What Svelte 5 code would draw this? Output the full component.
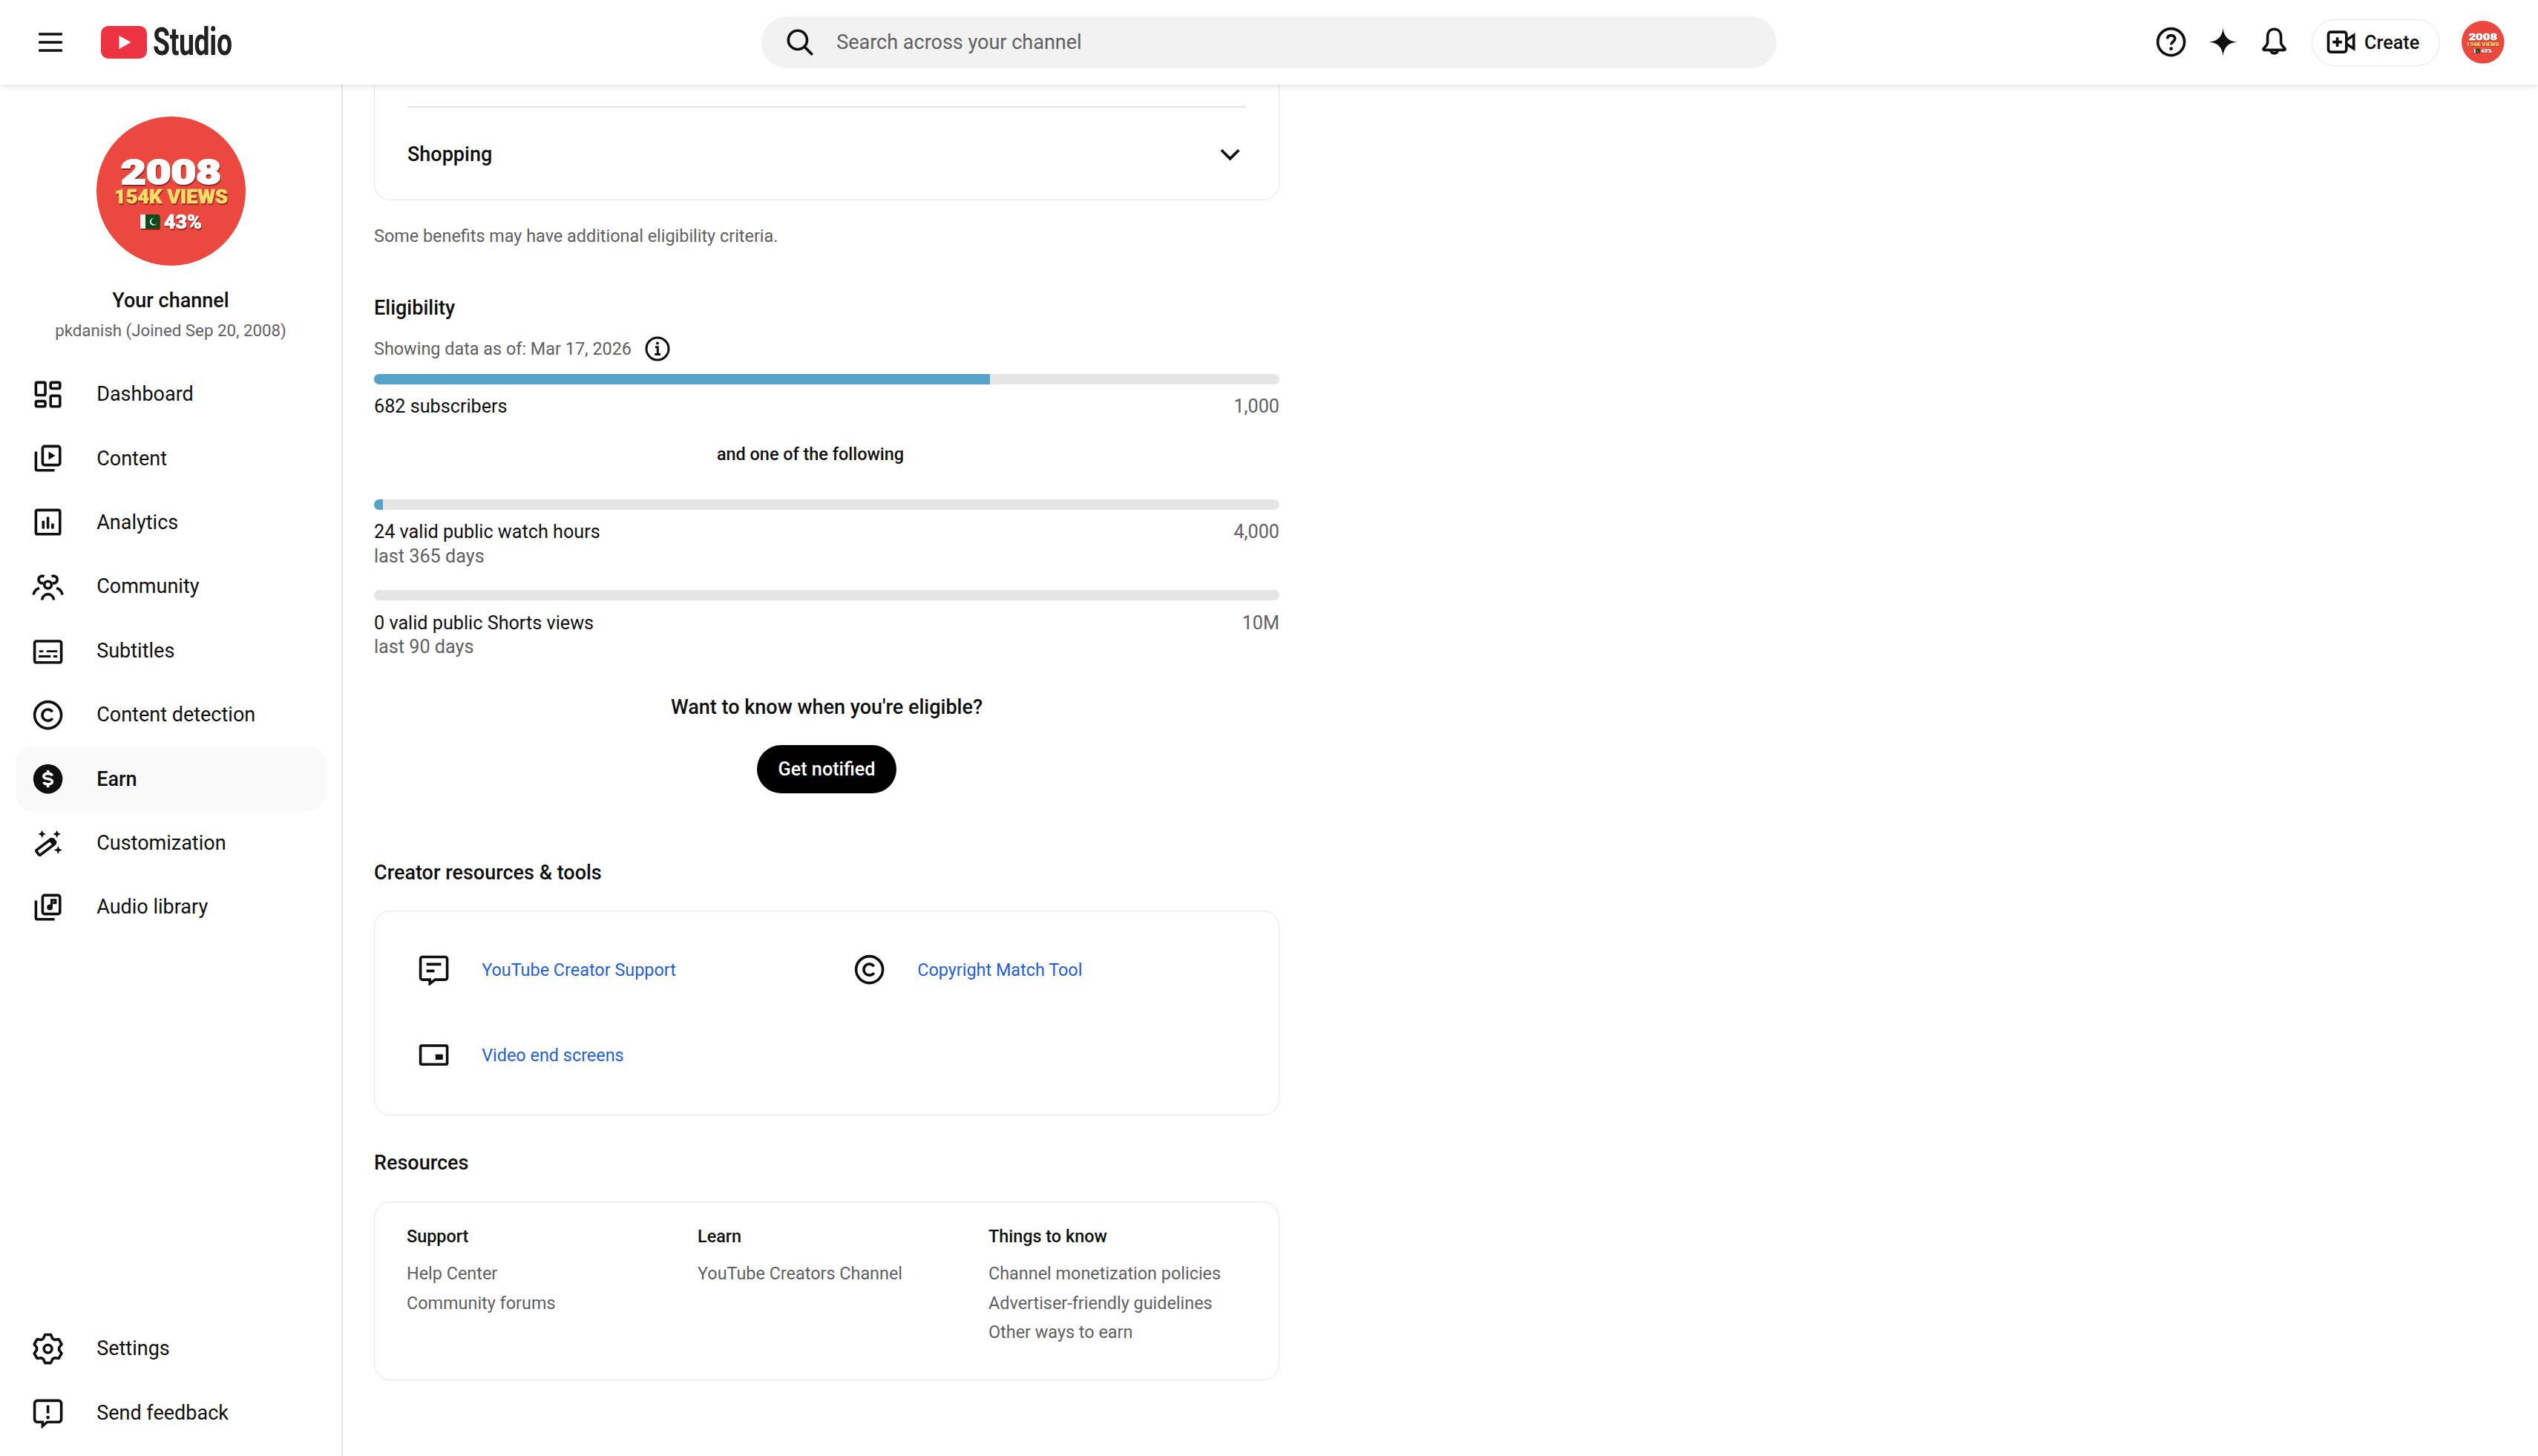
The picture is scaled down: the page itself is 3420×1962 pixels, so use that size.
<script lang="ts">
  const navTop = [
    { id: "dashboard", label: "Dashboard" },
    { id: "content", label: "Content" },
    { id: "analytics", label: "Analytics" },
    { id: "community", label: "Community" },
    { id: "subtitles", label: "Subtitles" },
    { id: "copyright", label: "Content detection" },
    { id: "earn", label: "Earn", active: true },
    { id: "wand", label: "Customization" },
    { id: "audio", label: "Audio library" },
  ];
  const navBottom = [
    { id: "settings", label: "Settings" },
    { id: "feedback", label: "Send feedback" },
  ];
  const tools = [
    { id: "support", label: "YouTube Creator Support" },
    { id: "copyright", label: "Copyright Match Tool" },
    { id: "endscreen", label: "Video end screens" },
  ];
  const resources = [
    { title: "Support", links: ["Help Center", "Community forums"] },
    { title: "Learn", links: ["YouTube Creators Channel"] },
    { title: "Things to know", links: ["Channel monetization policies", "Advertiser-friendly guidelines", "Other ways to earn"] },
  ];

  // six lobed cog outline for the settings icon
  function gearPath(): string {
    const pts: string[] = [];
    for (let k = 0; k < 6; k++) {
      const a = (k * Math.PI) / 3 - Math.PI / 2;
      const at = (r: number, off: number) =>
        `${(12 + r * Math.cos(a + off)).toFixed(2)} ${(12 + r * Math.sin(a + off)).toFixed(2)}`;
      pts.push(at(8.4, -0.42), at(10.8, -0.2), at(10.8, 0.2), at(8.4, 0.42));
    }
    return "M" + pts.join("L") + "Z";
  }
  const gear = gearPath();
</script>

{#snippet glyph(name: string)}
  <svg class="icon" viewBox="0 0 24 24" fill="none" stroke="#0f0f0f" stroke-width="2" aria-hidden="true">
    {#if name === "dashboard"}
      <rect x="3" y="3" width="7" height="9.5" rx="1" />
      <rect x="14" y="3" width="7" height="4.5" rx="1" />
      <rect x="3" y="17" width="7" height="4" rx="1" />
      <rect x="14" y="13" width="7" height="8" rx="1" />
    {:else if name === "content"}
      <rect x="8" y="3" width="13" height="14" rx="1.5" />
      <path d="M3 7v13a1 1 0 0 0 1 1h13" />
      <path d="M12.5 7v6l5-3z" fill="#0f0f0f" stroke="none" />
    {:else if name === "analytics"}
      <rect x="3" y="3" width="18" height="18" rx="1.2" />
      <path d="M7.5 11h2v6h-2zM11 8h2v9h-2zM14.5 13h2v4h-2z" fill="#0f0f0f" stroke="none" />
    {:else if name === "community"}
      <circle cx="12" cy="10.6" r="2.7" />
      <path d="M7.6 22a4.4 4.4 0 0 1 8.8 0" />
      <path d="M8.6 9.2a2.7 2.7 0 1 1 .6-4.8" />
      <path d="M15.4 9.2a2.7 2.7 0 1 0-.6-4.8" />
      <path d="M1.2 18a6 6 0 0 1 4.4-5" />
      <path d="M22.8 18a6 6 0 0 0-4.4-5" />
    {:else if name === "subtitles"}
      <rect x="2" y="5" width="20" height="16" rx="1.3" />
      <path d="M5.5 12.6h3M11 12.6h8M5 16.4h9M16 16.4h3" stroke-width="1.6" />
    {:else if name === "copyright"}
      <circle cx="12" cy="12" r="10" />
      <path d="M15.4 9.6a4.2 4.2 0 1 0 0 4.8" />
    {:else if name === "earn"}
      <circle cx="12" cy="12" r="11" fill="#0f0f0f" stroke="none" />
      <path d="M15.2 9.6C14.8 8.5 13.6 8 12 8c-1.8 0-3.2.8-3.2 2s1.4 1.7 3.2 2 3.2.8 3.2 2-1.4 2-3.2 2c-1.6 0-2.8-.5-3.2-1.6M12 5.6V8M12 16v2.4" stroke="#fff" />
    {:else if name === "wand"}
      <rect x="2.8" y="12.9" width="15" height="4.6" rx="1" transform="rotate(-37 10.3 15.2)" />
      <path d="M13.2 11.2l3.2-2.8 2.4 3-3.2 2.6z" fill="#0f0f0f" stroke="none" />
      <path d="M7.6 2.6l.9 2 2 .9-2 .9-.9 2-.9-2-2-.9 2-.9zM18.7 2.6l.9 2 2 .9-2 .9-.9 2-.9-2-2-.9 2-.9zM19.6 14.4l.9 2.2 2.3.9-2.3.9-.9 2.2-.9-2.2-2.3-.9 2.3-.9z" fill="#0f0f0f" stroke="none" />
    {:else if name === "audio"}
      <rect x="8" y="3" width="13" height="14" rx="1.5" />
      <path d="M3 7v13a1 1 0 0 0 1 1h13" />
      <circle cx="13.4" cy="12" r="2.2" fill="#0f0f0f" stroke="none" />
      <path d="M14.7 12V6.6h3v2.2h-2" stroke-width="1.7" />
    {:else if name === "settings"}
      <path d={gear} stroke-linejoin="round" />
      <circle cx="12" cy="12" r="3" />
    {:else if name === "feedback"}
      <path d="M4 3h16a2 2 0 0 1 2 2v12a2 2 0 0 1-2 2h-8.5L8 22v-3H4a2 2 0 0 1-2-2V5a2 2 0 0 1 2-2z" />
      <path d="M12 6.5v6" />
      <circle cx="12" cy="15.6" r="1.3" fill="#0f0f0f" stroke="none" />
    {:else if name === "support"}
      <path d="M3.5 2.5h17A1.5 1.5 0 0 1 22 4v14a1.5 1.5 0 0 1-1.5 1.5H13L9 22.5v-3H3.5A1.5 1.5 0 0 1 2 18V4a1.5 1.5 0 0 1 1.5-1.5z" />
      <path d="M6.5 8h11M6.5 13h6" />
    {:else if name === "endscreen"}
      <rect x="2" y="5" width="20" height="14" rx="1" />
      <path d="M13.2 11.6h5.6v4h-5.600z" fill="#0f0f0f" stroke="none" />
    {:else if name === "help"}
      <circle cx="12" cy="12" r="10" />
      <path d="M9.2 9.6C9.3 8 10.4 7 12 7c1.7 0 2.9 1 2.9 2.5 0 2.3-2.9 2.3-2.9 4.6" />
      <circle cx="12" cy="17" r="1.3" fill="#0f0f0f" stroke="none" />
    {:else if name === "spark"}
      <path d="M12 1.5C12.6 8 16 11.4 22.5 12 16 12.6 12.6 16 12 22.5 11.4 16 8 12.6 1.5 12 8 11.4 11.4 8 12 1.5z" fill="#0f0f0f" stroke="none" />
    {:else if name === "bell"}
      <path d="M12 2.4c3.2 0 5 2.5 5 5.6v4.4c0 1.600 1.500 3 2.900 4.500.4.500.1 1.100-.5 1.100H4.600c-.6 0-.9-.6-.5-1.100C5.500 15.400 7 14 7 12.400V8c0-3.100 1.800-5.600 5-5.600z" />
      <path d="M9.4 18.5a2.700 2.700 0 0 0 5.200 0" />
    {:else if name === "create"}
      <rect x="2.5" y="4.5" width="13.5" height="15" rx="1.8" />
      <path d="M16 10.5l5.500-3.500v10L16 13.500M9.200 8.500v7M5.700 12h7" />
    {:else if name === "chevron"}
      <path d="M5.5 9l6.500 6.500L18.500 9" />
    {:else if name === "search"}
      <circle cx="10.5" cy="10.5" r="7" />
      <path d="M15.5 15.5l6 6" />
    {/if}
  </svg>
{/snippet}

{#snippet avatar(cls: string)}
  <svg class={cls} viewBox="0 0 201 201" role="img" aria-label="Channel avatar">
    <circle cx="100.5" cy="100.5" r="100.5" fill="#eb483f" />
    <g class="badge">
      <text x="100.5" y="91" text-anchor="middle" font-size="46" textLength="135" lengthAdjust="spacingAndGlyphs" fill="#fff" stroke="#fff" stroke-width="2">2008</text>
      <text x="100.5" y="117" text-anchor="middle" font-size="25" textLength="153" lengthAdjust="spacingAndGlyphs" fill="#f8dc68" stroke="#f8dc68" stroke-width=".6">154K VIEWS</text>
      <rect x="59" y="132" width="7" height="19" fill="#f2f2f2" />
      <rect x="66" y="132" width="19" height="19" rx="1" fill="#0d4a1c" />
      <path d="M78.5 137a5 5 0 1 0 3 6.5 4.2 4.2 0 1 1-3-6.5z" fill="#f2f2f2" />
      <text x="116.5" y="151" text-anchor="middle" font-size="25" textLength="51" lengthAdjust="spacingAndGlyphs" fill="#fff" stroke="#fff" stroke-width=".6">43%</text>
    </g>
  </svg>
{/snippet}

{#snippet navItem(item: { id: string; label: string; active?: boolean })}
  <li class="nav-item" class:active={item.active}>
    {@render glyph(item.id)}
    <span>{item.label}</span>
  </li>
{/snippet}

<div class="studio">
  <header class="topbar">
    <div class="brand">
      <svg class="burger" viewBox="0 0 32 26" aria-hidden="true">
        <path d="M1.5 2h29M1.5 13h29M1.5 24h29" stroke="#0f0f0f" stroke-width="3.4" stroke-linecap="round" fill="none" />
      </svg>
      <svg class="yt-logo" viewBox="0 0 62 44" aria-hidden="true">
        <rect width="62" height="44" rx="10" fill="#ed3341" />
        <path d="M24.5 13v18l16-9z" fill="#fff" />
      </svg>
      <span class="wordmark">Studio</span>
    </div>
    <div class="search">
      {@render glyph("search")}
      <span>Search across your channel</span>
    </div>
    <div class="actions">
      {@render glyph("help")}
      {@render glyph("spark")}
      {@render glyph("bell")}
      <div class="create">
        {@render glyph("create")}
        <span>Create</span>
      </div>
      {@render avatar("avatar-small")}
    </div>
  </header>

  <div class="body">
    <aside class="sidebar">
      <div class="profile">
        {@render avatar("avatar-large")}
        <div class="profile-name">Your channel</div>
        <div class="profile-sub">pkdanish (Joined Sep 20, 2008)</div>
      </div>
      <ul class="nav">
        {#each navTop as item (item.id)}
          {@render navItem(item)}
        {/each}
      </ul>
      <ul class="nav nav-bottom">
        {#each navBottom as item (item.id)}
          {@render navItem(item)}
        {/each}
      </ul>
    </aside>

    <main class="main">
      <section class="benefits card">
        <div class="divider"></div>
        <div class="shopping">
          <span>Shopping</span>
          {@render glyph("chevron")}
        </div>
      </section>
      <p class="note">Some benefits may have additional eligibility criteria.</p>

      <h2 class="heading eligibility">Eligibility</h2>
      <div class="as-of">
        <span>Showing data as of: Mar 17, 2026</span>
        <svg class="info" viewBox="0 0 24 24" fill="none" stroke="#0f0f0f" stroke-width="2" aria-hidden="true">
          <circle cx="12" cy="12" r="10" />
          <path d="M10 10.5h2.200v6.500M9.500 17h5.200" />
          <circle cx="12" cy="7" r="1.3" fill="#0f0f0f" stroke="none" />
        </svg>
      </div>

      <div class="bar bar-subs"><div class="fill" style="width: 68%"></div></div>
      <div class="metric metric-subs"><span>682 subscribers</span><span class="goal">1,000</span></div>

      <div class="one-of">and one of the following</div>

      <div class="bar bar-hours"><div class="fill" style="width: 1%"></div></div>
      <div class="metric metric-hours"><span>24 valid public watch hours</span><span class="goal">4,000</span></div>
      <div class="period">last 365 days</div>

      <div class="bar bar-shorts"></div>
      <div class="metric metric-shorts"><span>0 valid public Shorts views</span><span class="goal">10M</span></div>
      <div class="period period-shorts">last 90 days</div>

      <div class="notify-title">Want to know when you're eligible?</div>
      <div class="notify"><button type="button">Get notified</button></div>

      <h2 class="heading tools-heading">Creator resources &amp; tools</h2>
      <section class="card tools">
        {#each tools as tool (tool.id)}
          <div class="tool">
            {@render glyph(tool.id)}
            <span class="link">{tool.label}</span>
          </div>
        {/each}
      </section>

      <h2 class="heading resources-heading">Resources</h2>
      <section class="card resources">
        {#each resources as col (col.title)}
          <div class="res-col">
            <div class="res-title">{col.title}</div>
            <div class="res-links">
              {#each col.links as link (link)}
                <div class="res-link">{link}</div>
              {/each}
            </div>
          </div>
        {/each}
      </section>
    </main>
  </div>
</div>

<style>
  :global(body) {
    margin: 0;
    background: #fff;
    overflow: hidden;
  }

  .studio {
    display: flex;
    flex-direction: column;
    height: 1962px;
    overflow: hidden;
    color: #0f0f0f;
    font-family: Roboto, "Liberation Sans", sans-serif;
    font-size: 25.2px;
  }

  .icon {
    display: block;
    flex: none;
    width: 43.2px;
    height: 43.2px;
  }

  .topbar {
    position: relative;
    z-index: 2;
    flex: none;
    display: grid;
    grid-template-columns: 1026px 1368px 1fr;
    align-items: center;
    height: 114px;
    background: #fff;
    box-shadow: 0 2px 8px rgba(0, 0, 0, 0.12);
  }

  .brand {
    display: flex;
    align-items: center;
    padding-left: 52px;
  }

  .burger {
    width: 32px;
    height: 26px;
  }

  .yt-logo {
    width: 62px;
    height: 44px;
    margin-left: 52px;
  }

  .wordmark {
    margin-left: 8px;
    color: #212121;
    font-size: 52px;
    font-weight: 700;
    line-height: 1;
    letter-spacing: -0.5px;
    transform: scaleX(0.72);
    transform-origin: left center;
  }

  .search {
    display: flex;
    align-items: center;
    gap: 28px;
    height: 70px;
    padding-left: 30px;
    border-radius: 35px;
    background: #f2f2f2;
    color: #606060;
    font-size: 27px;
  }

  .actions {
    display: flex;
    align-items: center;
    justify-content: flex-end;
    gap: 26.5px;
    padding-right: 45px;
  }

  .create {
    display: flex;
    align-items: center;
    gap: 10px;
    width: 173px;
    height: 63px;
    margin-left: 2px;
    padding-left: 17px;
    border: 1.5px solid #e5e5e5;
    border-radius: 32px;
    box-sizing: border-box;
    font-weight: 500;
  }

  .avatar-small {
    display: block;
    width: 57.6px;
    height: 57.6px;
    margin-left: 3px;
  }

  .avatar-large {
    display: block;
    width: 201px;
    height: 201px;
    margin: 0 auto;
  }

  .badge text {
    font-family: Roboto, "Liberation Sans", sans-serif;
    font-weight: 900;
  }

  .badge {
    filter: drop-shadow(1px 2px 0 rgba(130, 30, 25, 0.8));
  }

  .body {
    flex: 1;
    display: flex;
    min-height: 0;
  }

  .sidebar {
    flex: none;
    display: flex;
    flex-direction: column;
    width: 462px;
    box-sizing: border-box;
    border-right: 2px solid #e5e5e5;
  }

  .profile {
    padding-top: 43px;
    text-align: center;
  }

  .profile-name {
    margin-top: 29px;
    font-size: 27px;
    font-weight: 500;
    line-height: 36px;
  }

  .profile-sub {
    margin-top: 6px;
    color: #606060;
    font-size: 22.3px;
    line-height: 32px;
  }

  .nav {
    margin: 27px 0 0;
    padding: 0 22px;
    list-style: none;
  }

  .nav-bottom {
    margin-top: auto;
    padding-bottom: 15px;
  }

  .nav-item {
    display: flex;
    align-items: center;
    gap: 44px;
    height: 86.4px;
    padding-left: 21px;
    border-radius: 22px;
    font-size: 27px;
  }

  .nav-item.active {
    background: #f9f9f9;
    font-weight: 500;
  }

  .main {
    flex: none;
    width: 1220px;
    margin-left: 42px;
  }

  .card {
    border: 1.5px solid #e5e5e5;
    border-radius: 22px;
    box-sizing: border-box;
  }

  .benefits {
    height: 156px;
    padding: 29px 44px 0;
    border-top: 0;
    border-radius: 0 0 22px 22px;
  }

  .divider {
    height: 1.5px;
    background: #e5e5e5;
  }

  .shopping {
    display: flex;
    align-items: center;
    justify-content: space-between;
    height: 126px;
    font-size: 27px;
    font-weight: 500;
  }

  .note {
    margin: 30px 0 0;
    color: #606060;
    font-size: 23.4px;
    line-height: 36px;
  }

  .heading {
    margin: 0;
    font-size: 27px;
    font-weight: 500;
    line-height: 36px;
  }

  .eligibility {
    margin-top: 61px;
  }

  .as-of {
    display: flex;
    align-items: center;
    gap: 17px;
    height: 36px;
    margin-top: 19px;
    color: #606060;
    font-size: 23.4px;
  }

  .info {
    display: block;
    width: 36px;
    height: 36px;
  }

  .bar {
    height: 14px;
    border-radius: 7px;
    background: #e5e5e5;
    overflow: hidden;
  }

  .fill {
    height: 100%;
    background: #55a3c8;
  }

  .bar-subs {
    margin-top: 16px;
  }

  .metric {
    display: flex;
    justify-content: space-between;
    font-size: 25.2px;
    line-height: 36px;
  }

  .metric-subs {
    margin-top: 12px;
  }

  .goal {
    color: #606060;
  }

  .one-of {
    margin-top: 28px;
    padding-right: 44px;
    font-size: 23.4px;
    font-weight: 500;
    line-height: 36px;
    text-align: center;
  }

  .bar-hours {
    margin-top: 43px;
  }

  .metric-hours {
    margin-top: 13px;
    line-height: 33px;
  }

  .metric-shorts {
    margin-top: 14px;
    line-height: 33px;
  }

  .period {
    color: #606060;
    font-size: 25.2px;
    line-height: 33px;
  }

  .period-shorts {
    margin-top: -1.5px;
  }

  .bar-shorts {
    margin-top: 29px;
  }

  .notify-title {
    margin-top: 47.5px;
    font-size: 27px;
    font-weight: 500;
    line-height: 36px;
    text-align: center;
  }

  .notify {
    display: flex;
    justify-content: center;
    margin-top: 33px;
  }

  .notify button {
    width: 188px;
    height: 65px;
    padding: 0;
    border: 0;
    border-radius: 33px;
    background: #000;
    color: #fff;
    font: inherit;
    font-size: 25.2px;
    font-weight: 500;
  }

  .tools-heading {
    margin-top: 89px;
  }

  .tools {
    display: grid;
    grid-template-columns: 587px 1fr;
    grid-auto-rows: 115px;
    height: 275.5px;
    margin-top: 33px;
    padding: 21px 0 0 58px;
  }

  .tool {
    display: flex;
    align-items: center;
    gap: 43px;
  }

  .link {
    color: #1f5fd6;
    font-size: 23.4px;
  }

  .resources-heading {
    margin-top: 46.5px;
  }

  .resources {
    display: grid;
    grid-template-columns: repeat(3, 392px);
    height: 241px;
    margin-top: 34px;
    padding: 28px 0 0 43px;
  }

  .res-title {
    font-size: 23.4px;
    font-weight: 500;
    line-height: 36px;
  }

  .res-links {
    margin-top: 13px;
    color: #606060;
    font-size: 23.4px;
    line-height: 39.6px;
  }
</style>
